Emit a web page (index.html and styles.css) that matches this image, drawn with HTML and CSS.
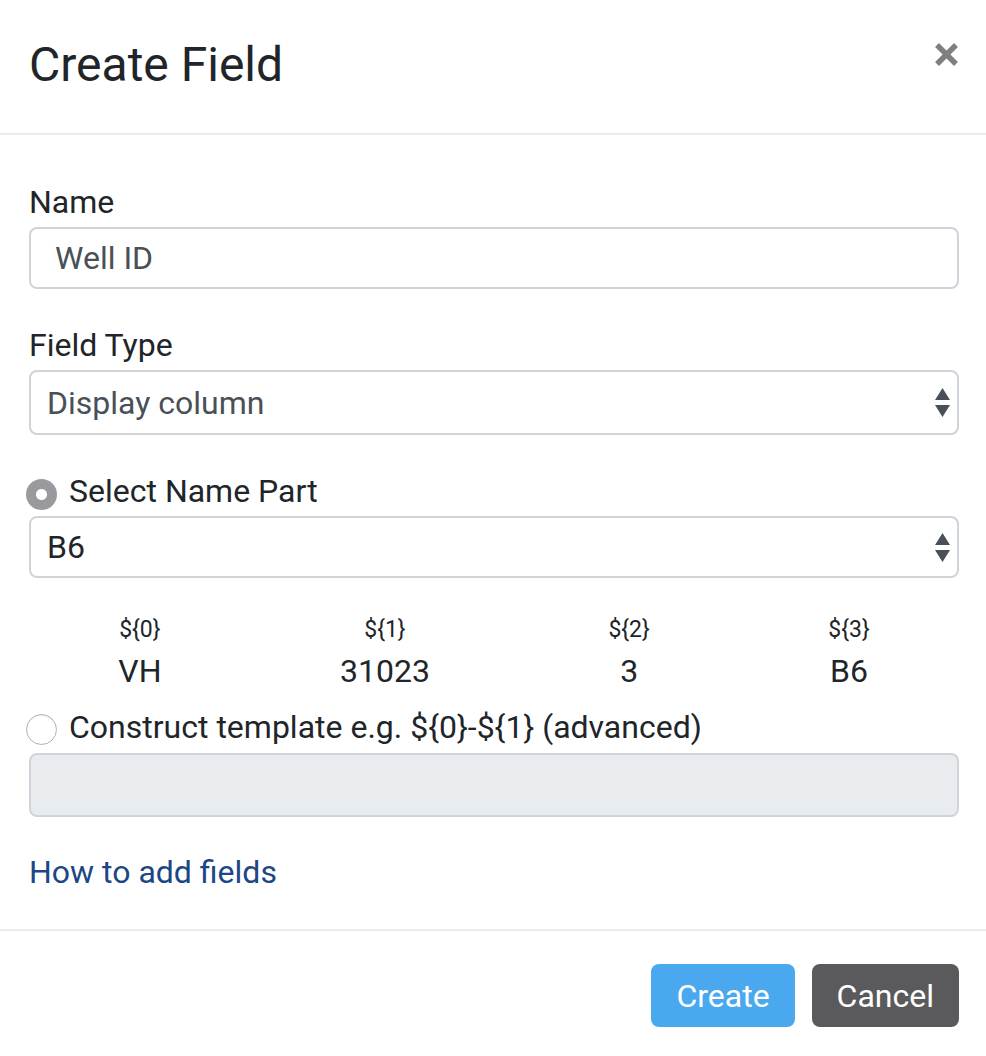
FILE: index.html
```html
<!DOCTYPE html>
<html lang="en">
<head>
  <meta charset="UTF-8">
  <title>Create Field</title>
  <link rel="stylesheet" href="styles.css">
</head>
<body>

<div class="modal">
  <div class="modal-header">
    <h4 class="modal-title">Create Field</h4>
    <svg class="close" width="23" height="23" viewBox="0 0 23 23">
      <path d="M2 2 L21 21 M21 2 L2 21" stroke="#7f7f7f" stroke-width="5.5"/>
    </svg>
  </div>

  <div class="modal-body">
    <div class="form-group">
      <label class="label">Name</label>
      <input class="input" type="text" value="Well ID">
    </div>

    <div class="form-group">
      <label class="label">Field Type</label>
      <div class="select">
        <span>Display column</span>
        <svg width="15" height="29" viewBox="0 0 15 29">
          <path d="M7.5 0 L15 12 L0 12 Z M0 17 L15 17 L7.5 29 Z" fill="#495057"/>
        </svg>
      </div>
    </div>

    <div class="form-group">
      <div class="radio-row">
        <span class="radio checked"></span>
        <span>Select Name Part</span>
      </div>
      <div class="select select-short dark">
        <span>B6</span>
        <svg width="15" height="29" viewBox="0 0 15 29">
          <path d="M7.5 0 L15 12 L0 12 Z M0 17 L15 17 L7.5 29 Z" fill="#495057"/>
        </svg>
      </div>
    </div>

    <div class="parts">
      <div class="part"><div class="part-key">${0}</div><div class="part-val">VH</div></div>
      <div class="part"><div class="part-key">${1}</div><div class="part-val">31023</div></div>
      <div class="part"><div class="part-key">${2}</div><div class="part-val">3</div></div>
      <div class="part"><div class="part-key">${3}</div><div class="part-val">B6</div></div>
    </div>

    <div class="radio-row second">
      <span class="radio"></span>
      <span>Construct template e.g. ${0}-${1} (advanced)</span>
    </div>
    <input class="input disabled" type="text" disabled>

    <a class="help-link" href="#">How to add fields</a>
  </div>

  <div class="modal-footer">
    <button class="btn btn-primary">Create</button>
    <button class="btn btn-secondary">Cancel</button>
  </div>
</div>

</body>
</html>
```

FILE: styles.css
```css
body {
  margin: 0;
  font-family: Roboto, "Liberation Sans", sans-serif;
  color: #212529;
  background: #fff;
}

.modal {
  width: 986px;
  height: 1056px;
  display: flex;
  flex-direction: column;
}

/* header */
.modal-header {
  display: flex;
  justify-content: space-between;
  align-items: flex-start;
  padding: 36px 28px 39px 29px;
  border-bottom: 2px solid #e9ecef;
}

.modal-title {
  margin: 0;
  font-size: 48px;
  font-weight: 400;
  line-height: 58px;
}

.close {
  margin-top: 7px;
}

/* body */
.modal-body {
  padding: 43px 27px 33px 29px;
  font-size: 32px;
  line-height: 48px;
}

.form-group {
  margin-bottom: 32px;
}

.label {
  display: block;
  margin-bottom: 1px;
}

.input {
  display: block;
  box-sizing: border-box;
  width: 100%;
  height: 62px;
  padding: 0 24px;
  font-family: inherit;
  font-size: 32px;
  color: #495057;
  border: 2px solid #ced4da;
  border-radius: 8px;
  background: #fff;
  outline: none;
}

.input.disabled {
  height: 64px;
  margin-top: 2px;
  background: #e9ecef;
}

.select {
  box-sizing: border-box;
  height: 65px;
  display: flex;
  justify-content: space-between;
  align-items: center;
  padding: 0 7px 0 16px;
  border: 2px solid #ced4da;
  border-radius: 8px;
  color: #495057;
}

.select-short {
  height: 62px;
  margin-top: 1px;
}

.dark {
  color: #212529;
}

.radio-row {
  display: flex;
  align-items: flex-start;
}

.radio-row.second {
  margin-top: 8px;
}

.radio {
  box-sizing: border-box;
  width: 31px;
  height: 31px;
  margin: 12px 12px 0 -3px;
  border-radius: 50%;
  border: 1.5px solid #b3b3b3;
  background: #fff;
  box-shadow: inset 0 1px 1px rgba(0, 0, 0, 0.08);
}

.radio.checked {
  border: 0;
  box-shadow: none;
  background: radial-gradient(circle, #fff 5px, #9a9a9e 6px);
}

.radio-row.second .radio {
  margin-top: 11px;
}

/* name parts */
.parts {
  display: flex;
  margin-top: 35px;
}

.part {
  flex: auto;
  text-align: center;
}

.part-key {
  font-size: 23px;
  line-height: 34px;
}

.part-val {
  font-size: 32px;
  line-height: 48px;
}

.help-link {
  display: block;
  margin-top: 31px;
  color: #1c4785;
  text-decoration: none;
}

/* footer */
.modal-footer {
  display: flex;
  justify-content: flex-end;
  gap: 17px;
  padding: 33px 27px 29px 29px;
  border-top: 2px solid #e9ecef;
}

.btn {
  height: 63px;
  padding: 0 25px;
  font-family: inherit;
  font-size: 32px;
  color: #fff;
  border: 0;
  border-radius: 8px;
}

.btn-primary {
  background: #4aa9ee;
}

.btn-secondary {
  background: #5a5a5c;
}
```
